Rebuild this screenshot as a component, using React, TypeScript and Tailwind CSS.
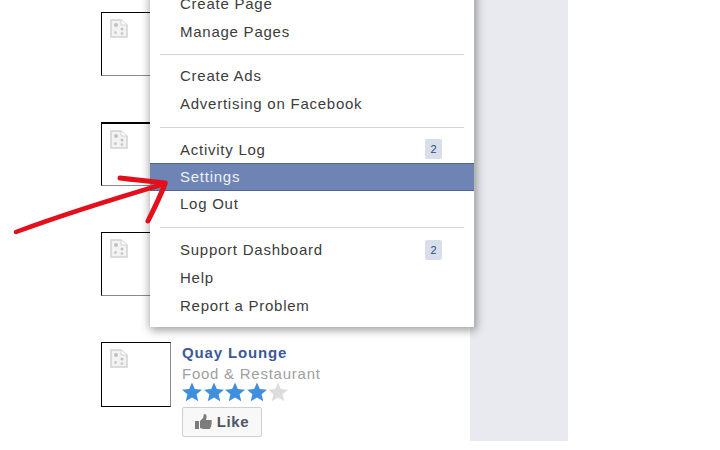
const THUMBS = [
  "border-t-black border-l-black border-b-[#8a8a8a] border-r-[#8a8a8a]",
  "border-t-black border-t-2 border-l-black border-b-[#8a8a8a] border-r-[#8a8a8a]",
  "border-t-black border-l-black border-b-[#8a8a8a] border-r-[#8a8a8a]",
];

function BrokenImage() {
  return (
    <svg width="18" height="19" viewBox="0 0 18 19" className="ml-[8px] mt-[6px]">
      <path d="M1 1h10l6 5v12H1z" fill="#f3f3f3" stroke="#d2d2d2" strokeWidth="1.5" />
      <path d="M11 1v5h6" fill="#fff" stroke="#d2d2d2" />
      <circle cx="6" cy="6" r="2" fill="#c2c2c2" />
      <circle cx="12" cy="10" r="1.500" fill="#c2c2c2" />
      <circle cx="5.500" cy="13.500" r="1.500" fill="#cdcdcd" />
      <circle cx="12" cy="14.500" r="1.500" fill="#cdcdcd" />
    </svg>
  );
}

function Star({ color }: { color: string }) {
  return (
    <svg width="20" height="20" viewBox="0 0 24 23" className="mr-[1.5px]">
      <path d="M12 0l3.4 8 8.6.7-6.5 5.6 2 8.4L12 18.2 4.500 22.700l2-8.400L0 8.700 8.600 8z" fill={color} />
    </svg>
  );
}

function Item({
  label,
  badge,
  active,
  nudge,
}: {
  label: string;
  badge?: string;
  active?: boolean;
  nudge?: string;
}) {
  return (
    <div
      className={`h-[28px] flex items-center justify-between pl-[30px] pr-[32px] text-[15px] tracking-[0.75px] ${
        active ? "bg-[#6d84b4] text-[#eef1f7] border-y border-[#4f6796]" : "text-[#3c3c3c]"
      }`}
    >
      <span className={nudge}>{label}</span>
      {badge && (
        <span className="w-[17px] h-[20px] rounded-[2px] bg-[#d8dfea] flex items-center justify-center text-[11px] tracking-normal text-[#2f4a85]">
          {badge}
        </span>
      )}
    </div>
  );
}

export default function App() {
  return (
    <div className="relative w-[720px] h-[450px] overflow-hidden bg-white font-['Liberation_Sans',Arial,sans-serif]">
      <div className="flex">
        <div className="w-[470px] h-[441px] pl-[101px] pt-[12px] flex flex-col gap-[46px]">
          {THUMBS.map((cls, i) => (
            <div key={i} className={`w-[70px] h-[64px] border bg-white ${cls}`}>
              <BrokenImage />
            </div>
          ))}
          <div className="flex gap-[11px]">
            <div className="w-[70px] h-[65px] border border-t-black border-l-black border-b-black border-r-[#8a8a8a] bg-white shrink-0">
              <BrokenImage />
            </div>
            <div className="flex flex-col mt-px">
              <div className="text-[15px] leading-[20px] font-bold tracking-[0.85px] text-[#3b5998]">Quay Lounge</div>
              <div className="text-[15px] leading-[20px] mt-px tracking-[0.75px] text-[#a0a0a0]">Food &amp; Restaurant</div>
              <div className="flex h-[20px] -mt-[2px]">
                <Star color="#3f8fdc" />
                <Star color="#3f8fdc" />
                <Star color="#3f8fdc" />
                <Star color="#3f8fdc" />
                <Star color="#dddddd" />
              </div>
              <button className="mt-[5px] w-[80px] h-[30px] rounded-[2px] border border-[#cfcfcf] bg-[#f8f8f8] flex items-center justify-center gap-[5px] text-[15px] font-bold tracking-[0.6px] text-[#4e5665]">
                <svg width="17" height="16" viewBox="0 0 17 16">
                  <path d="M0 7h4v8H0zM5 7l3-3 1-4c2 0 3 1 2.500 3.500L11 6h5c1 0 1 2 .5 2.500.5 1 .3 2-.3 2.500.2 1 0 2-.7 2.300 0 1-.5 1.700-1.500 1.700H8l-3-1z" fill="#7c7c7c" />
                </svg>
                Like
              </button>
            </div>
          </div>
        </div>
        <div className="w-[98px] h-[441px] bg-[#e9eaef]" />
      </div>

      {/* dropdown sits over the list */}
      <div className="absolute left-[150px] top-[-10px] w-[326px] bg-white border-r-2 border-r-[#b5b5b5] pb-[7px] shadow-[0_3px_9px_rgba(0,0,0,0.4)]">
        <Item label="Create Page" />
        <Item label="Manage Pages" />
        <div className="mx-[10px] my-[8px] h-px bg-[#d4d4d4]" />
        <Item label="Create Ads" nudge="-mt-[2px]" />
        <Item label="Advertising on Facebook" nudge="-mt-[2px]" />
        <div className="mx-[10px] mt-[8px] mb-[7px] h-px bg-[#d4d4d4]" />
        <Item label="Activity Log" badge="2" nudge="mt-[2px]" />
        <Item label="Settings" active />
        <Item label="Log Out" nudge="-mt-[2px]" />
        <div className="mx-[10px] my-[8px] h-px bg-[#d4d4d4]" />
        <Item label="Support Dashboard" badge="2" />
        <Item label="Help" />
        <Item label="Report a Problem" />
      </div>

      {/* hand drawn arrow */}
      <svg className="absolute left-0 top-0" width="720" height="450" fill="none">
        <path d="M16 232 C70 212 120 197 164 184" stroke="#e3101c" strokeWidth="4.500" strokeLinecap="round" />
        <path d="M120 178 C135 180 150 181 165 183" stroke="#e3101c" strokeWidth="5" strokeLinecap="round" />
        <path d="M165 184 C160 197 154 209 148 221" stroke="#e3101c" strokeWidth="5" strokeLinecap="round" />
      </svg>
    </div>
  );
}
